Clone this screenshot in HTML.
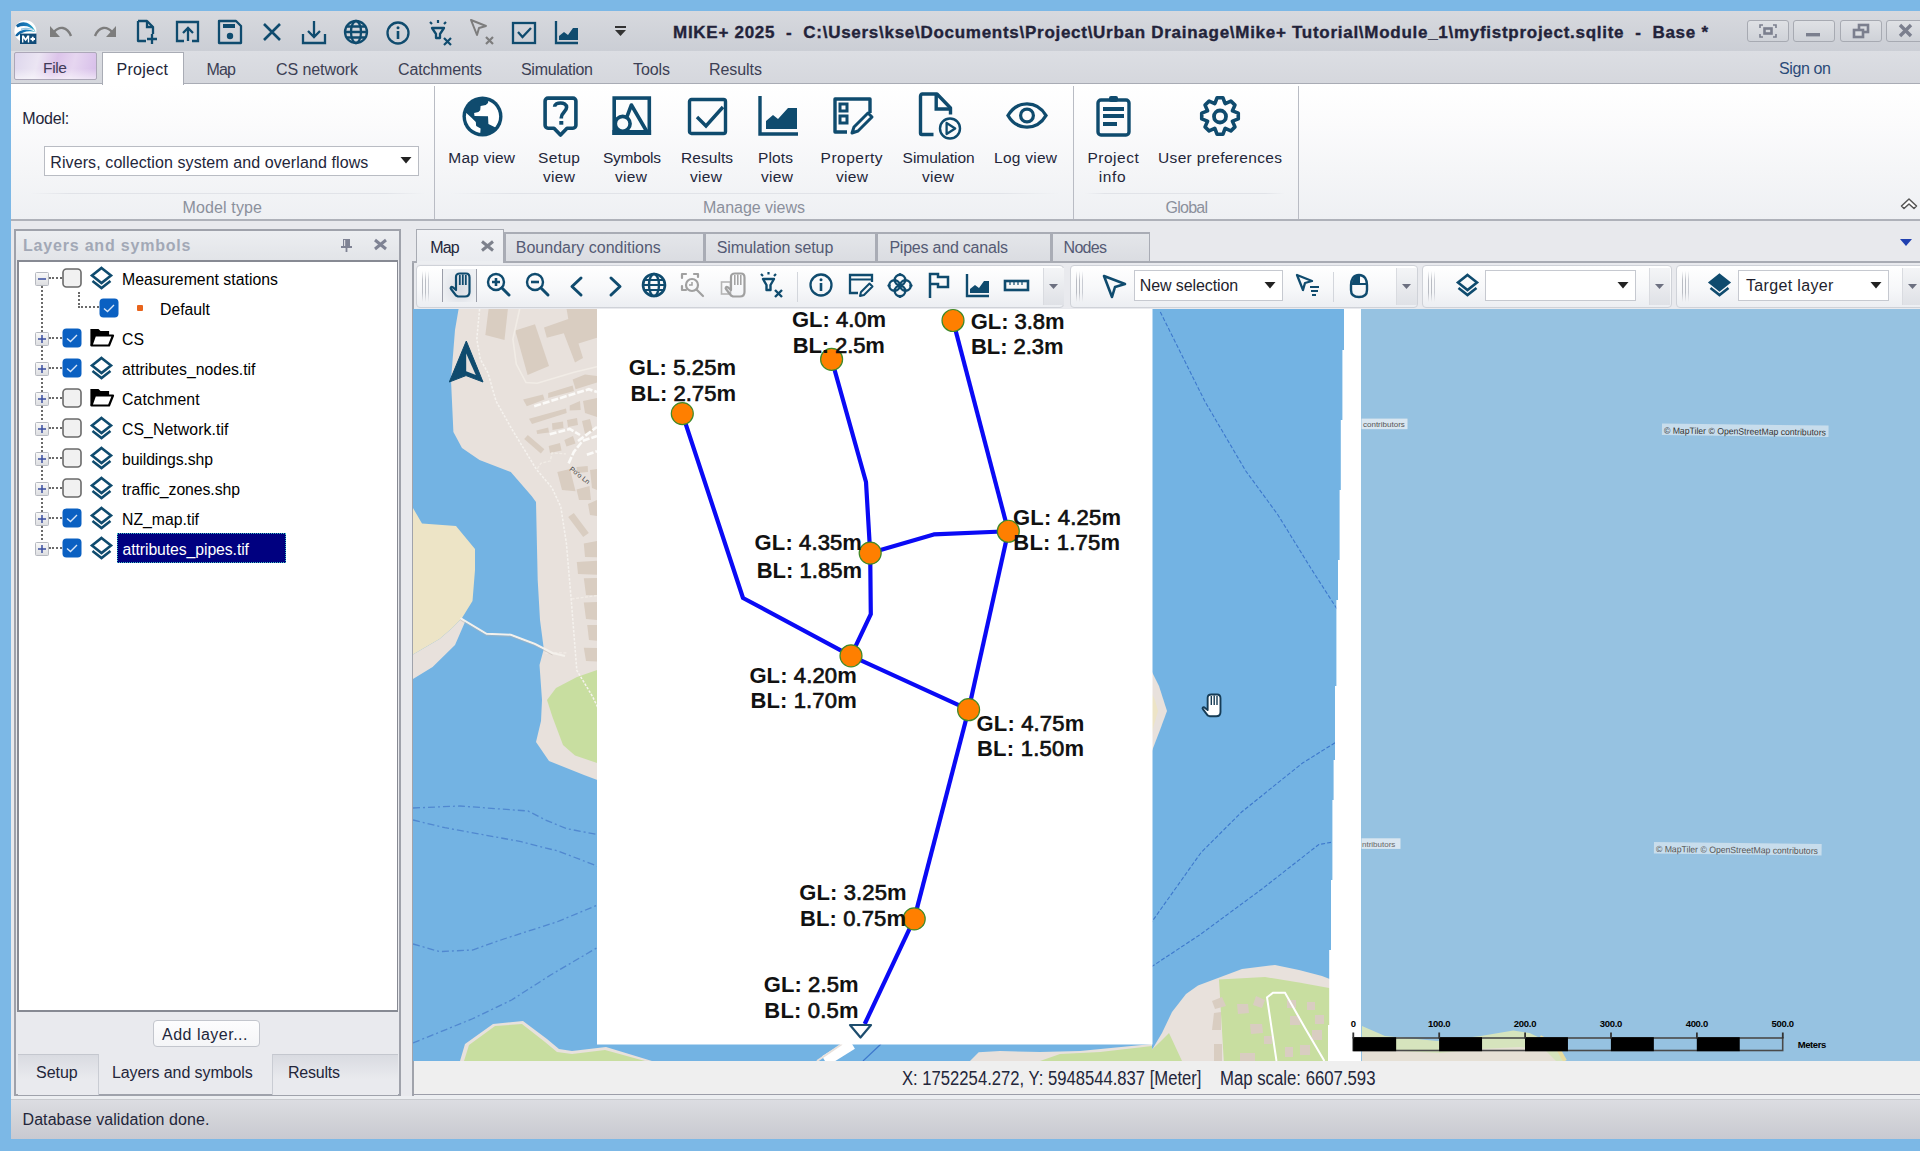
<!DOCTYPE html>
<html><head><meta charset="utf-8"><style>
html,body{margin:0;padding:0;width:1920px;height:1151px;overflow:hidden;background:#7cb8e6;}
body{position:relative;font-family:"Liberation Sans",sans-serif;}
svg{position:absolute;overflow:visible}
</style></head><body>
<div style="position:absolute;left:11px;top:11px;width:1909px;height:1128px;background:#e8e9ed"></div>
<div style="position:absolute;left:11px;top:11px;width:1909px;height:40px;background:linear-gradient(#d7d9de,#cbced5)"></div>
<div style="position:absolute;left:11px;top:51px;width:1909px;height:33px;background:linear-gradient(#dcdee3,#d5d7dd)"></div>
<div style="position:absolute;left:11px;top:83px;width:1909px;height:1px;background:#a9acb5"></div>
<div style="position:absolute;left:11px;top:84px;width:1909px;height:136px;background:linear-gradient(#ffffff,#fbfbfc 30%,#eef0f3)"></div>
<div style="position:absolute;left:11px;top:219px;width:1909px;height:2px;background:#aeb1b9"></div>
<div style="position:absolute;left:14px;top:52px;width:83px;height:28px;background:linear-gradient(rgba(255,255,255,0) 60%,rgba(255,255,255,0.55)),linear-gradient(105deg,#ddd6ec 0%,#ebe5f3 28%,#dcc4ea 50%,#e6d6f0 70%,#d6bde9 100%);border:1px solid #aca7b8;box-sizing:border-box;border-radius:2px"></div>
<div style="position:absolute;left:43.00px;top:60.22px;font-family:'Liberation Sans',sans-serif;font-size:15.5px;line-height:1;font-weight:400;color:#403b58;white-space:pre;letter-spacing:-0.328px;">File</div>
<div style="position:absolute;left:102px;top:52px;width:82px;height:33px;background:#fff;border:1px solid #a9acb5;border-bottom:none;box-sizing:border-box"></div>
<div style="position:absolute;left:116.50px;top:62.20px;font-family:'Liberation Sans',sans-serif;font-size:16px;line-height:1;font-weight:400;color:#23263a;white-space:pre;letter-spacing:0.284px;">Project</div>
<div style="position:absolute;left:206.50px;top:62.20px;font-family:'Liberation Sans',sans-serif;font-size:16px;line-height:1;font-weight:400;color:#3c4054;white-space:pre;letter-spacing:-0.812px;">Map</div>
<div style="position:absolute;left:276.00px;top:62.20px;font-family:'Liberation Sans',sans-serif;font-size:16px;line-height:1;font-weight:400;color:#3c4054;white-space:pre;letter-spacing:-0.078px;">CS network</div>
<div style="position:absolute;left:398.00px;top:62.20px;font-family:'Liberation Sans',sans-serif;font-size:16px;line-height:1;font-weight:400;color:#3c4054;white-space:pre;letter-spacing:-0.153px;">Catchments</div>
<div style="position:absolute;left:521.00px;top:62.20px;font-family:'Liberation Sans',sans-serif;font-size:16px;line-height:1;font-weight:400;color:#3c4054;white-space:pre;letter-spacing:-0.300px;">Simulation</div>
<div style="position:absolute;left:633.00px;top:62.20px;font-family:'Liberation Sans',sans-serif;font-size:16px;line-height:1;font-weight:400;color:#3c4054;white-space:pre;letter-spacing:-0.090px;">Tools</div>
<div style="position:absolute;left:709.00px;top:62.20px;font-family:'Liberation Sans',sans-serif;font-size:16px;line-height:1;font-weight:400;color:#3c4054;white-space:pre;letter-spacing:-0.060px;">Results</div>
<div style="position:absolute;left:1779.00px;top:61.20px;font-family:'Liberation Sans',sans-serif;font-size:16px;line-height:1;font-weight:400;color:#2a4a78;white-space:pre;letter-spacing:-0.378px;">Sign on</div>
<div style="position:absolute;left:673.00px;top:23.85px;font-family:'Liberation Sans',sans-serif;font-size:17px;line-height:1;font-weight:700;color:#23233a;white-space:pre;letter-spacing:0.722px;-webkit-text-stroke:0.35px #23233a">MIKE+ 2025  -  C:\Users\kse\Documents\Project\Urban Drainage\Mike+ Tutorial\Module_1\myfistproject.sqlite  -  Base *</div>
<div style="position:absolute;left:1747px;top:20px;width:42px;height:22px;border:1px solid #a7aab2;border-radius:3px;box-sizing:border-box;background:linear-gradient(#dfe1e5,#cfd2d8)"></div>
<div style="position:absolute;left:1793px;top:20px;width:42px;height:22px;border:1px solid #a7aab2;border-radius:3px;box-sizing:border-box;background:linear-gradient(#dfe1e5,#cfd2d8)"></div>
<div style="position:absolute;left:1840px;top:20px;width:42px;height:22px;border:1px solid #a7aab2;border-radius:3px;box-sizing:border-box;background:linear-gradient(#dfe1e5,#cfd2d8)"></div>
<div style="position:absolute;left:1886px;top:20px;width:42px;height:22px;border:1px solid #a7aab2;border-radius:3px;box-sizing:border-box;background:linear-gradient(#dfe1e5,#cfd2d8)"></div>
<svg style="left:13px;top:19px;" width="25" height="26" viewBox="0 0 25 26"><defs><linearGradient id="lw" x1="0" y1="0" x2="1" y2="0"><stop offset="0" stop-color="#0d5c9a"/><stop offset="0.6" stop-color="#1b7fbf"/><stop offset="1" stop-color="#25b0c0"/></linearGradient></defs>
<circle cx="12.4" cy="12.2" r="11" fill="#fff"/>
<path d="M3 6.5 C8 1.5,17 1.5,22.5 12.5 C18 7.5,11 5.5,4.5 8.5 Z" fill="url(#lw)"/>
<path d="M2.2 16.5 C6 10,15 8.5,23 13 C17 11.5,10 11.5,4 17.5 Z" fill="url(#lw)"/>
<path d="M8 9.5 C13 8,18 9,22 11 C17 10,12 10,8 11Z" fill="#9ccbe6"/>
<rect x="7" y="14.6" width="16.4" height="10.4" fill="#0f4b78"/>
<path d="M9 23.5V16.5H10.8L12.6 19.6L14.4 16.5H16.2V23.5H14.8V19.3L12.6 22.2L10.4 19.3V23.5Z" fill="#fff"/>
<path d="M17.5 20H22M19.75 17.7V22.3" stroke="#fff" stroke-width="1.8"/></svg>
<svg style="left:49px;top:25px;" width="26" height="14" viewBox="0 0 26 14"><path d="M5 7 C10 1,18 1,22 11" fill="none" stroke="#7d7d7d" stroke-width="2.4"/><path d="M1 1 L1 12 L11 12Z" fill="#7d7d7d"/></svg>
<svg style="left:91px;top:25px;" width="26" height="14" viewBox="0 0 26 14"><path d="M21 7 C16 1,8 1,4 11" fill="none" stroke="#7d7d7d" stroke-width="2.4"/><path d="M25 1 L25 12 L15 12Z" fill="#7d7d7d"/></svg>
<svg style="left:136px;top:19px;" width="22" height="26" viewBox="0 0 22 26"><path d="M2 2H11L17 8V15M2 2V22H10" stroke="#0f4b6e" stroke-width="2.3" fill="none" stroke-linejoin="round"/><path d="M11 2V8H17" stroke="#0f4b6e" stroke-width="2.3" fill="none"/><path d="M16 15V25M11 20H21" stroke="#0f4b6e" stroke-width="2.3" fill="none"/></svg>
<svg style="left:175px;top:20px;" width="26" height="24" viewBox="0 0 26 24"><path d="M7 2H23V21H17M9 21H2V2H7" stroke="#0f4b6e" stroke-width="2.3" fill="none"/><path d="M13 21V8M8 13L13 8L18 13" stroke="#0f4b6e" stroke-width="2.3" fill="none"/></svg>
<svg style="left:217px;top:19px;" width="26" height="26" viewBox="0 0 26 26"><path d="M2 2H19L24 7V24H2Z" stroke="#0f4b6e" stroke-width="2.3" fill="none" stroke-linejoin="round"/><rect x="6" y="5" width="12" height="4" fill="#0f4b6e"/><circle cx="13" cy="17" r="3.2" fill="#0f4b6e"/></svg>
<svg style="left:262px;top:22px;" width="20" height="20" viewBox="0 0 20 20"><path d="M2 2L18 18M18 2L2 18" stroke="#0f4b6e" stroke-width="2.6"/></svg>
<svg style="left:301px;top:19px;" width="26" height="26" viewBox="0 0 26 26"><path d="M2 15V24H24V15" stroke="#0f4b6e" stroke-width="2.3" fill="none"/><path d="M13 2V18M7 12L13 18L19 12" stroke="#0f4b6e" stroke-width="2.3" fill="none"/></svg>
<svg style="left:343px;top:19px;" width="26" height="26" viewBox="0 0 26 26"><circle cx="13" cy="13" r="11" stroke="#0f4b6e" stroke-width="2.3" fill="none"/><ellipse cx="13" cy="13" rx="5" ry="11" stroke="#0f4b6e" stroke-width="2.3" fill="none"/><path d="M2 13H24M4 7.5H22M4 18.5H22" stroke="#0f4b6e" stroke-width="2.3" fill="none"/></svg>
<svg style="left:386px;top:21px;" width="25" height="25" viewBox="0 0 25 25"><circle cx="12" cy="12" r="10.5" stroke="#0f4b6e" stroke-width="2.3" fill="none"/><path d="M12 10V18" stroke="#0f4b6e" stroke-width="2.6"/><circle cx="12" cy="6.8" r="1.5" fill="#0f4b6e"/></svg>
<svg style="left:427px;top:19px;" width="27" height="27" viewBox="0 0 27 27"><path d="M5 9H17L13 15V19H9V15Z" stroke="#0f4b6e" stroke-width="2.3" fill="none" stroke-linejoin="round"/><path d="M11 1V4M3 3L5 5M19 3L17 5" stroke="#0f4b6e" stroke-width="2.2"/><path d="M17 19L24 26M24 19L17 26" stroke="#0f4b6e" stroke-width="2.2"/></svg>
<svg style="left:469px;top:18px;" width="27" height="28" viewBox="0 0 27 28"><path d="M2 2L17 8L10 10L8 17Z" fill="none" stroke="#7d7d7d" stroke-width="2" stroke-linejoin="round"/><path d="M17 19L24 26M24 19L17 26" stroke="#7d7d7d" stroke-width="2.2"/></svg>
<svg style="left:511px;top:21px;" width="26" height="23" viewBox="0 0 26 23"><rect x="2" y="2" width="22" height="20" stroke="#0f4b6e" stroke-width="2.3" fill="none"/><path d="M7 11L11.5 16L20 7" stroke="#0f4b6e" stroke-width="2.3" fill="none"/></svg>
<svg style="left:554px;top:20px;" width="26" height="25" viewBox="0 0 26 25"><path d="M2 1V23H24" stroke="#0f4b6e" stroke-width="2.3" fill="none"/><path d="M5 20V16L10 12L14 15L19 8H24V20Z" fill="#0f4b6e"/></svg>
<svg style="left:614px;top:26px;" width="13" height="11" viewBox="0 0 13 11"><rect x="1" y="0" width="11" height="2" fill="#333"/><path d="M1 4H12L6.5 10Z" fill="#333"/></svg>
<svg style="left:1757px;top:23px;" width="22" height="16" viewBox="0 0 22 16"><path d="M3 5V2H6M16 2H19V5M19 11V14H16M6 14H3V11" stroke="#7b7f8e" stroke-width="1.6" fill="none"/><rect x="7.5" y="5.5" width="7" height="5" fill="none" stroke="#7b7f8e" stroke-width="2.6"/></svg>
<svg style="left:1803px;top:26px;" width="22" height="12" viewBox="0 0 22 12"><rect x="3" y="7" width="14" height="3.4" fill="#7b7f8e"/></svg>
<svg style="left:1850px;top:23px;" width="22" height="16" viewBox="0 0 22 16"><rect x="9" y="2" width="9" height="7" fill="none" stroke="#7b7f8e" stroke-width="2.6"/><rect x="4" y="7" width="9" height="7" fill="#dcdee2" stroke="#7b7f8e" stroke-width="2.6"/></svg>
<svg style="left:1896px;top:23px;" width="22" height="16" viewBox="0 0 22 16"><path d="M4 2L15 13M15 2L4 13" stroke="#7b7f8e" stroke-width="3.4"/></svg>
<div style="position:absolute;left:22.30px;top:110.80px;font-family:'Liberation Sans',sans-serif;font-size:16px;line-height:1;font-weight:400;color:#23263a;white-space:pre;letter-spacing:-0.206px;">Model:</div>
<div style="position:absolute;left:44px;top:146px;width:375px;height:30px;background:#fff;border:1px solid #b9bcc3;box-sizing:border-box"></div>
<div style="position:absolute;left:50.30px;top:154.50px;font-family:'Liberation Sans',sans-serif;font-size:16px;line-height:1;font-weight:400;color:#23263a;white-space:pre;letter-spacing:0.095px;">Rivers, collection system and overland flows</div>
<svg style="left:400px;top:156px;" width="12" height="8" viewBox="0 0 12 8"><path d="M0.5 1H11.5L6 7.5Z" fill="#222"/></svg>
<div style="position:absolute;left:434px;top:86px;width:1px;height:133px;background:#b9bcc4"></div>
<div style="position:absolute;left:1073px;top:86px;width:1px;height:133px;background:#b9bcc4"></div>
<div style="position:absolute;left:1298px;top:86px;width:1px;height:133px;background:#b9bcc4"></div>
<div style="position:absolute;left:30px;top:193px;width:395px;height:1px;background:linear-gradient(90deg,rgba(220,222,228,0),#e1e3e8 10%,#e1e3e8 90%,rgba(220,222,228,0))"></div>
<div style="position:absolute;left:450px;top:193px;width:610px;height:1px;background:linear-gradient(90deg,rgba(220,222,228,0),#e1e3e8 10%,#e1e3e8 90%,rgba(220,222,228,0))"></div>
<div style="position:absolute;left:1085px;top:193px;width:200px;height:1px;background:linear-gradient(90deg,rgba(220,222,228,0),#e1e3e8 10%,#e1e3e8 90%,rgba(220,222,228,0))"></div>
<div style="position:absolute;left:182.50px;top:200.20px;font-family:'Liberation Sans',sans-serif;font-size:16px;line-height:1;font-weight:400;color:#8b909c;white-space:pre;letter-spacing:0.137px;">Model type</div>
<div style="position:absolute;left:703.00px;top:200.20px;font-family:'Liberation Sans',sans-serif;font-size:16px;line-height:1;font-weight:400;color:#8b909c;white-space:pre;letter-spacing:-0.026px;">Manage views</div>
<div style="position:absolute;left:1165.60px;top:200.20px;font-family:'Liberation Sans',sans-serif;font-size:16px;line-height:1;font-weight:400;color:#8b909c;white-space:pre;letter-spacing:-0.770px;">Global</div>
<div style="position:absolute;left:448.30px;top:149.62px;font-family:'Liberation Sans',sans-serif;font-size:15.5px;line-height:1;font-weight:400;color:#23263a;white-space:pre;letter-spacing:0.176px;">Map view</div>
<div style="position:absolute;left:538.00px;top:149.62px;font-family:'Liberation Sans',sans-serif;font-size:15.5px;line-height:1;font-weight:400;color:#23263a;white-space:pre;letter-spacing:0.371px;">Setup</div>
<div style="position:absolute;left:543.00px;top:168.93px;font-family:'Liberation Sans',sans-serif;font-size:15.5px;line-height:1;font-weight:400;color:#23263a;white-space:pre;letter-spacing:0.328px;">view</div>
<div style="position:absolute;left:603.00px;top:149.62px;font-family:'Liberation Sans',sans-serif;font-size:15.5px;line-height:1;font-weight:400;color:#23263a;white-space:pre;letter-spacing:-0.240px;">Symbols</div>
<div style="position:absolute;left:615.00px;top:168.93px;font-family:'Liberation Sans',sans-serif;font-size:15.5px;line-height:1;font-weight:400;color:#23263a;white-space:pre;letter-spacing:0.328px;">view</div>
<div style="position:absolute;left:681.00px;top:149.62px;font-family:'Liberation Sans',sans-serif;font-size:15.5px;line-height:1;font-weight:400;color:#23263a;white-space:pre;letter-spacing:0.052px;">Results</div>
<div style="position:absolute;left:690.00px;top:168.93px;font-family:'Liberation Sans',sans-serif;font-size:15.5px;line-height:1;font-weight:400;color:#23263a;white-space:pre;letter-spacing:0.328px;">view</div>
<div style="position:absolute;left:758.00px;top:149.62px;font-family:'Liberation Sans',sans-serif;font-size:15.5px;line-height:1;font-weight:400;color:#23263a;white-space:pre;letter-spacing:0.133px;">Plots</div>
<div style="position:absolute;left:761.00px;top:168.93px;font-family:'Liberation Sans',sans-serif;font-size:15.5px;line-height:1;font-weight:400;color:#23263a;white-space:pre;letter-spacing:0.328px;">view</div>
<div style="position:absolute;left:820.60px;top:149.62px;font-family:'Liberation Sans',sans-serif;font-size:15.5px;line-height:1;font-weight:400;color:#23263a;white-space:pre;letter-spacing:0.487px;">Property</div>
<div style="position:absolute;left:836.00px;top:168.93px;font-family:'Liberation Sans',sans-serif;font-size:15.5px;line-height:1;font-weight:400;color:#23263a;white-space:pre;letter-spacing:0.328px;">view</div>
<div style="position:absolute;left:902.60px;top:149.62px;font-family:'Liberation Sans',sans-serif;font-size:15.5px;line-height:1;font-weight:400;color:#23263a;white-space:pre;letter-spacing:-0.042px;">Simulation</div>
<div style="position:absolute;left:922.00px;top:168.93px;font-family:'Liberation Sans',sans-serif;font-size:15.5px;line-height:1;font-weight:400;color:#23263a;white-space:pre;letter-spacing:0.328px;">view</div>
<div style="position:absolute;left:994.00px;top:149.62px;font-family:'Liberation Sans',sans-serif;font-size:15.5px;line-height:1;font-weight:400;color:#23263a;white-space:pre;letter-spacing:0.259px;">Log view</div>
<div style="position:absolute;left:1087.50px;top:149.62px;font-family:'Liberation Sans',sans-serif;font-size:15.5px;line-height:1;font-weight:400;color:#23263a;white-space:pre;letter-spacing:0.492px;">Project</div>
<div style="position:absolute;left:1098.75px;top:168.93px;font-family:'Liberation Sans',sans-serif;font-size:15.5px;line-height:1;font-weight:400;color:#23263a;white-space:pre;letter-spacing:0.600px;">info</div>
<div style="position:absolute;left:1158.00px;top:149.62px;font-family:'Liberation Sans',sans-serif;font-size:15.5px;line-height:1;font-weight:400;color:#23263a;white-space:pre;letter-spacing:0.341px;">User preferences</div>
<svg style="left:1900px;top:197px;" width="20" height="15" viewBox="0 0 20 15"><path d="M1.5 9L9 2L16.5 9L14 11.5L9 7L4 11.5Z" fill="#fff" stroke="#555" stroke-width="1.5" stroke-linejoin="round"/></svg>
<svg style="left:462px;top:96px;" width="41" height="41" viewBox="0 0 41 41"><defs><clipPath id="gcl"><circle cx="20.5" cy="20.5" r="16.6"/></clipPath></defs><circle cx="20.5" cy="20.5" r="20" fill="#0f4b6e"/><g clip-path="url(#gcl)" fill="#fff"><path d="M26.4 4 L34 9 L38 16.9 L38 24.2 L33.5 31.5 L26.4 28.1 L26 20.3 L12.5 19.9 L12.1 16.9 L16.4 16 L18.2 14.2 L18.6 9.9 L23.8 9 L26 6.9Z"/><path d="M2 15.5 L4.3 16.9 L9 21.2 L13.8 26 L14.2 29.9 L18.6 32.5 L18.2 38 L12.5 36 L4 30 Z"/></g></svg>
<svg style="left:542px;top:95px;" width="37" height="43" viewBox="0 0 37 43"><path d="M6 3.1H31C32.6 3.1,33.9 4.4,33.9 6V30.3C33.9 31.9,32.6 33.2,31 33.2H25L18.5 40L12 33.2H6C4.4 33.2,3.1 31.9,3.1 30.3V6C3.1 4.4,4.4 3.1,6 3.1Z" fill="none" stroke="#0f4b6e" stroke-width="3.6" stroke-linejoin="round"/><path d="M12.6 11.8C12.6 6.8,24.6 6.3,24.6 12.3C24.6 16.8,19.3 17.5,19.3 22.8V23.6" fill="none" stroke="#0f4b6e" stroke-width="3.6"/><rect x="17.3" y="26" width="4" height="3.7" fill="#0f4b6e"/></svg>
<svg style="left:612px;top:95px;" width="40" height="41" viewBox="0 0 40 41"><rect x="2.2" y="3.05" width="35.1" height="35.15" fill="none" stroke="#0f4b6e" stroke-width="3.6"/><rect x="0.4" y="35" width="38.7" height="5" fill="#0f4b6e"/><path d="M14.6 22.6 L19.4 10 L34.5 36" fill="none" stroke="#0f4b6e" stroke-width="3.6" stroke-linejoin="round"/><circle cx="10.7" cy="28.8" r="7.4" fill="none" stroke="#0f4b6e" stroke-width="3.6"/></svg>
<svg style="left:687px;top:97px;" width="41" height="40" viewBox="0 0 41 40"><rect x="2.5" y="2.5" width="36" height="34" rx="2" stroke="#0f4b6e" stroke-width="3.4" fill="none"/><path d="M10 20L19 29L36 10" stroke="#0f4b6e" stroke-width="3.4" fill="none"/></svg>
<svg style="left:757px;top:96px;" width="42" height="41" viewBox="0 0 42 41"><path d="M3 0V38H41" stroke="#0f4b6e" stroke-width="3.4" fill="none"/><path d="M9 33V25L16 19L21 23L31 12H40V33Z" fill="#0f4b6e"/></svg>
<svg style="left:832px;top:96px;" width="42" height="41" viewBox="0 0 42 41"><path d="M15 36H3V3H38V17" stroke="#0f4b6e" stroke-width="3.4" fill="none" stroke-linejoin="round"/><rect x="8" y="8" width="7" height="7" fill="none" stroke="#0f4b6e" stroke-width="3"/><rect x="8" y="20" width="7" height="7" fill="none" stroke="#0f4b6e" stroke-width="3"/><path d="M20 37L22 31L36 17L40 21L26 35Z" fill="none" stroke="#0f4b6e" stroke-width="3" stroke-linejoin="round"/></svg>
<svg style="left:917px;top:92px;" width="46" height="48" viewBox="0 0 46 48"><path d="M16.5 42.5H5C4 42.5,3.5 42,3.5 41V4.5C3.5 3.5,4 2,5 2H20L33.5 16V22.5" stroke="#0f4b6e" stroke-width="3.4" fill="none" stroke-linejoin="round"/><path d="M19.2 2V17H33.5" stroke="#0f4b6e" stroke-width="3.4" fill="none"/><circle cx="33" cy="36.5" r="10" fill="none" stroke="#0f4b6e" stroke-width="2.4"/><path d="M29.6 31L38.2 36.5L29.6 42Z" fill="none" stroke="#0f4b6e" stroke-width="2.3" stroke-linejoin="round"/></svg>
<svg style="left:1006px;top:101px;" width="42" height="30" viewBox="0 0 42 30"><path d="M2 14.5C11 -1,31 -1,40 14.5C31 30,11 30,2 14.5Z" stroke="#0f4b6e" stroke-width="3.4" fill="none"/><circle cx="21" cy="14.5" r="6.4" stroke="#0f4b6e" stroke-width="3.2" fill="none"/></svg>
<svg style="left:1095px;top:95px;" width="37" height="43" viewBox="0 0 37 43"><rect x="3" y="5" width="31" height="35" rx="3" stroke="#0f4b6e" stroke-width="3.4" fill="none"/><rect x="14" y="1" width="9" height="6" rx="2" fill="#0f4b6e"/><path d="M8 14H29M8 21H29M8 29H22" stroke="#0f4b6e" stroke-width="4"/></svg>
<svg style="left:1200px;top:96px;" width="40" height="41" viewBox="0 0 40 41"><path d="M14.94 7.48 L17.11 1.73 L22.89 1.73 L25.06 7.48 L25.27 7.57 L30.87 5.03 L34.97 9.13 L32.43 14.73 L32.52 14.94 L38.27 17.11 L38.27 22.89 L32.52 25.06 L32.43 25.27 L34.97 30.87 L30.87 34.97 L25.27 32.43 L25.06 32.52 L22.89 38.27 L17.11 38.27 L14.94 32.52 L14.73 32.43 L9.13 34.97 L5.03 30.87 L7.57 25.27 L7.48 25.06 L1.73 22.89 L1.73 17.11 L7.48 14.94 L7.57 14.73 L5.03 9.13 L9.13 5.03 L14.73 7.57Z" fill="none" stroke="#0f4b6e" stroke-width="3.6" stroke-linejoin="round"/><circle cx="20" cy="20.5" r="6" fill="none" stroke="#0f4b6e" stroke-width="3.8"/></svg>
<div style="position:absolute;left:14px;top:229px;width:387px;height:867px;border:2px solid #9fa2ab;box-sizing:border-box;background:#e9eaee"></div>
<div style="position:absolute;left:16px;top:231px;width:383px;height:29px;background:linear-gradient(#eceef1,#e2e4e8)"></div>
<div style="position:absolute;left:23.00px;top:237.70px;font-family:'Liberation Sans',sans-serif;font-size:16px;line-height:1;font-weight:700;color:#a2a8b6;white-space:pre;letter-spacing:0.803px;">Layers and symbols</div>
<svg style="left:340px;top:238px;" width="13" height="14" viewBox="0 0 13 14"><rect x="3" y="1" width="7" height="8" fill="#7f8394"/><rect x="1" y="8" width="11" height="2" fill="#7f8394"/><rect x="5.6" y="9" width="1.8" height="5" fill="#7f8394"/><rect x="4" y="2" width="1.2" height="6" fill="#dcdde2"/></svg>
<svg style="left:373px;top:238px;" width="15" height="13" viewBox="0 0 15 13"><path d="M2 2L13 11M13 2L2 11" stroke="#7f8394" stroke-width="3"/></svg>
<div style="position:absolute;left:17px;top:260px;width:381px;height:752px;border:2px solid #878a93;border-right-width:1px;border-bottom-width:2px;box-sizing:border-box;background:#fff"></div>
<svg width="0" height="0" style="position:absolute"><defs><linearGradient id="expg" x1="0" y1="0" x2="0" y2="1"><stop offset="0" stop-color="#fafafa"/><stop offset="1" stop-color="#dcdde0"/></linearGradient></defs></svg>
<div style="position:absolute;left:41px;top:286px;width:0;height:262px;border-left:2px dotted #6a6a6a"></div>
<div style="position:absolute;left:49px;top:277px;width:13px;height:0;border-top:2px dotted #6a6a6a"></div>
<svg style="left:35px;top:272px;" width="14" height="14" viewBox="0 0 14 14"><rect x="0.5" y="0.5" width="13" height="13" rx="1" fill="url(#expg)" stroke="#b6b9c0"/><path d="M3 7H11" stroke="#3a4ea0" stroke-width="1.5"/></svg>
<svg style="left:62px;top:268px;" width="20" height="20" viewBox="0 0 20 20"><rect x="1" y="1" width="18" height="18" rx="3.5" fill="#f1f1f1" stroke="#6a6a6a" stroke-width="1.6"/></svg>
<svg style="left:90px;top:266px;" width="23" height="25" viewBox="0 0 23 25"><path d="M11.5 2L21 9.5L11.5 17L2 9.5Z" fill="none" stroke="#0f4b6e" stroke-width="2.6" stroke-linejoin="miter"/><path d="M2.5 15L11.5 22L20.5 15" fill="none" stroke="#0f4b6e" stroke-width="2.6"/></svg>
<div style="position:absolute;left:122.00px;top:272.37px;font-family:'Liberation Sans',sans-serif;font-size:15.8px;line-height:1;font-weight:400;color:#000;white-space:pre;letter-spacing:0.030px;">Measurement stations</div>
<div style="position:absolute;left:78px;top:292px;width:21px;height:16px;border-left:2px dotted #6a6a6a;border-bottom:2px dotted #6a6a6a;box-sizing:border-box"></div>
<svg style="left:99px;top:298px;" width="20" height="20" viewBox="0 0 20 20"><rect x="0.5" y="0.5" width="19" height="19" rx="4" fill="#0a60c2"/><path d="M5 10.5L8.5 13.5L15 7" fill="none" stroke="#d8e6f8" stroke-width="1.4"/></svg>
<div style="position:absolute;left:137px;top:305px;width:6px;height:6px;background:#e8641c;border-radius:1px"></div>
<div style="position:absolute;left:160.00px;top:302.37px;font-family:'Liberation Sans',sans-serif;font-size:15.8px;line-height:1;font-weight:400;color:#000;white-space:pre;letter-spacing:-0.010px;">Default</div>
<div style="position:absolute;left:49px;top:337px;width:13px;height:0;border-top:2px dotted #6a6a6a"></div>
<svg style="left:35px;top:332px;" width="14" height="14" viewBox="0 0 14 14"><rect x="0.5" y="0.5" width="13" height="13" rx="1" fill="url(#expg)" stroke="#b6b9c0"/><path d="M3 7H11" stroke="#3a4ea0" stroke-width="1.5"/><path d="M7 3V11" stroke="#3a4ea0" stroke-width="1.5"/></svg>
<svg style="left:62px;top:328px;" width="20" height="20" viewBox="0 0 20 20"><rect x="0.5" y="0.5" width="19" height="19" rx="4" fill="#0a60c2"/><path d="M5 10.5L8.5 13.5L15 7" fill="none" stroke="#d8e6f8" stroke-width="1.4"/></svg>
<svg style="left:90px;top:328px;" width="24" height="19" viewBox="0 0 24 19"><path d="M1.5 17.5V2H8L10 4H18V7" fill="none" stroke="#000" stroke-width="2.2"/><path d="M1 3H9L10 5H18V7H5L1.5 17Z" fill="#000"/><path d="M1.5 17.5L5 7.5H23L19 17.5Z" fill="none" stroke="#000" stroke-width="2.2" stroke-linejoin="round"/></svg>
<div style="position:absolute;left:122.00px;top:332.37px;font-family:'Liberation Sans',sans-serif;font-size:15.8px;line-height:1;font-weight:400;color:#000;white-space:pre;letter-spacing:0.047px;">CS</div>
<div style="position:absolute;left:49px;top:367px;width:13px;height:0;border-top:2px dotted #6a6a6a"></div>
<svg style="left:35px;top:362px;" width="14" height="14" viewBox="0 0 14 14"><rect x="0.5" y="0.5" width="13" height="13" rx="1" fill="url(#expg)" stroke="#b6b9c0"/><path d="M3 7H11" stroke="#3a4ea0" stroke-width="1.5"/><path d="M7 3V11" stroke="#3a4ea0" stroke-width="1.5"/></svg>
<svg style="left:62px;top:358px;" width="20" height="20" viewBox="0 0 20 20"><rect x="0.5" y="0.5" width="19" height="19" rx="4" fill="#0a60c2"/><path d="M5 10.5L8.5 13.5L15 7" fill="none" stroke="#d8e6f8" stroke-width="1.4"/></svg>
<svg style="left:90px;top:356px;" width="23" height="25" viewBox="0 0 23 25"><path d="M11.5 2L21 9.5L11.5 17L2 9.5Z" fill="none" stroke="#0f4b6e" stroke-width="2.6" stroke-linejoin="miter"/><path d="M2.5 15L11.5 22L20.5 15" fill="none" stroke="#0f4b6e" stroke-width="2.6"/></svg>
<div style="position:absolute;left:122.00px;top:362.37px;font-family:'Liberation Sans',sans-serif;font-size:15.8px;line-height:1;font-weight:400;color:#000;white-space:pre;letter-spacing:0.001px;">attributes_nodes.tif</div>
<div style="position:absolute;left:49px;top:397px;width:13px;height:0;border-top:2px dotted #6a6a6a"></div>
<svg style="left:35px;top:392px;" width="14" height="14" viewBox="0 0 14 14"><rect x="0.5" y="0.5" width="13" height="13" rx="1" fill="url(#expg)" stroke="#b6b9c0"/><path d="M3 7H11" stroke="#3a4ea0" stroke-width="1.5"/><path d="M7 3V11" stroke="#3a4ea0" stroke-width="1.5"/></svg>
<svg style="left:62px;top:388px;" width="20" height="20" viewBox="0 0 20 20"><rect x="1" y="1" width="18" height="18" rx="3.5" fill="#f1f1f1" stroke="#6a6a6a" stroke-width="1.6"/></svg>
<svg style="left:90px;top:388px;" width="24" height="19" viewBox="0 0 24 19"><path d="M1.5 17.5V2H8L10 4H18V7" fill="none" stroke="#000" stroke-width="2.2"/><path d="M1 3H9L10 5H18V7H5L1.5 17Z" fill="#000"/><path d="M1.5 17.5L5 7.5H23L19 17.5Z" fill="none" stroke="#000" stroke-width="2.2" stroke-linejoin="round"/></svg>
<div style="position:absolute;left:122.00px;top:392.37px;font-family:'Liberation Sans',sans-serif;font-size:15.8px;line-height:1;font-weight:400;color:#000;white-space:pre;letter-spacing:0.164px;">Catchment</div>
<div style="position:absolute;left:49px;top:427px;width:13px;height:0;border-top:2px dotted #6a6a6a"></div>
<svg style="left:35px;top:422px;" width="14" height="14" viewBox="0 0 14 14"><rect x="0.5" y="0.5" width="13" height="13" rx="1" fill="url(#expg)" stroke="#b6b9c0"/><path d="M3 7H11" stroke="#3a4ea0" stroke-width="1.5"/><path d="M7 3V11" stroke="#3a4ea0" stroke-width="1.5"/></svg>
<svg style="left:62px;top:418px;" width="20" height="20" viewBox="0 0 20 20"><rect x="1" y="1" width="18" height="18" rx="3.5" fill="#f1f1f1" stroke="#6a6a6a" stroke-width="1.6"/></svg>
<svg style="left:90px;top:416px;" width="23" height="25" viewBox="0 0 23 25"><path d="M11.5 2L21 9.5L11.5 17L2 9.5Z" fill="none" stroke="#0f4b6e" stroke-width="2.6" stroke-linejoin="miter"/><path d="M2.5 15L11.5 22L20.5 15" fill="none" stroke="#0f4b6e" stroke-width="2.6"/></svg>
<div style="position:absolute;left:122.00px;top:422.37px;font-family:'Liberation Sans',sans-serif;font-size:15.8px;line-height:1;font-weight:400;color:#000;white-space:pre;letter-spacing:0.081px;">CS_Network.tif</div>
<div style="position:absolute;left:49px;top:457px;width:13px;height:0;border-top:2px dotted #6a6a6a"></div>
<svg style="left:35px;top:452px;" width="14" height="14" viewBox="0 0 14 14"><rect x="0.5" y="0.5" width="13" height="13" rx="1" fill="url(#expg)" stroke="#b6b9c0"/><path d="M3 7H11" stroke="#3a4ea0" stroke-width="1.5"/><path d="M7 3V11" stroke="#3a4ea0" stroke-width="1.5"/></svg>
<svg style="left:62px;top:448px;" width="20" height="20" viewBox="0 0 20 20"><rect x="1" y="1" width="18" height="18" rx="3.5" fill="#f1f1f1" stroke="#6a6a6a" stroke-width="1.6"/></svg>
<svg style="left:90px;top:446px;" width="23" height="25" viewBox="0 0 23 25"><path d="M11.5 2L21 9.5L11.5 17L2 9.5Z" fill="none" stroke="#0f4b6e" stroke-width="2.6" stroke-linejoin="miter"/><path d="M2.5 15L11.5 22L20.5 15" fill="none" stroke="#0f4b6e" stroke-width="2.6"/></svg>
<div style="position:absolute;left:122.00px;top:452.37px;font-family:'Liberation Sans',sans-serif;font-size:15.8px;line-height:1;font-weight:400;color:#000;white-space:pre;letter-spacing:-0.102px;">buildings.shp</div>
<div style="position:absolute;left:49px;top:487px;width:13px;height:0;border-top:2px dotted #6a6a6a"></div>
<svg style="left:35px;top:482px;" width="14" height="14" viewBox="0 0 14 14"><rect x="0.5" y="0.5" width="13" height="13" rx="1" fill="url(#expg)" stroke="#b6b9c0"/><path d="M3 7H11" stroke="#3a4ea0" stroke-width="1.5"/><path d="M7 3V11" stroke="#3a4ea0" stroke-width="1.5"/></svg>
<svg style="left:62px;top:478px;" width="20" height="20" viewBox="0 0 20 20"><rect x="1" y="1" width="18" height="18" rx="3.5" fill="#f1f1f1" stroke="#6a6a6a" stroke-width="1.6"/></svg>
<svg style="left:90px;top:476px;" width="23" height="25" viewBox="0 0 23 25"><path d="M11.5 2L21 9.5L11.5 17L2 9.5Z" fill="none" stroke="#0f4b6e" stroke-width="2.6" stroke-linejoin="miter"/><path d="M2.5 15L11.5 22L20.5 15" fill="none" stroke="#0f4b6e" stroke-width="2.6"/></svg>
<div style="position:absolute;left:122.00px;top:482.37px;font-family:'Liberation Sans',sans-serif;font-size:15.8px;line-height:1;font-weight:400;color:#000;white-space:pre;letter-spacing:-0.071px;">traffic_zones.shp</div>
<div style="position:absolute;left:49px;top:517px;width:13px;height:0;border-top:2px dotted #6a6a6a"></div>
<svg style="left:35px;top:512px;" width="14" height="14" viewBox="0 0 14 14"><rect x="0.5" y="0.5" width="13" height="13" rx="1" fill="url(#expg)" stroke="#b6b9c0"/><path d="M3 7H11" stroke="#3a4ea0" stroke-width="1.5"/><path d="M7 3V11" stroke="#3a4ea0" stroke-width="1.5"/></svg>
<svg style="left:62px;top:508px;" width="20" height="20" viewBox="0 0 20 20"><rect x="0.5" y="0.5" width="19" height="19" rx="4" fill="#0a60c2"/><path d="M5 10.5L8.5 13.5L15 7" fill="none" stroke="#d8e6f8" stroke-width="1.4"/></svg>
<svg style="left:90px;top:506px;" width="23" height="25" viewBox="0 0 23 25"><path d="M11.5 2L21 9.5L11.5 17L2 9.5Z" fill="none" stroke="#0f4b6e" stroke-width="2.6" stroke-linejoin="miter"/><path d="M2.5 15L11.5 22L20.5 15" fill="none" stroke="#0f4b6e" stroke-width="2.6"/></svg>
<div style="position:absolute;left:122.00px;top:512.37px;font-family:'Liberation Sans',sans-serif;font-size:15.8px;line-height:1;font-weight:400;color:#000;white-space:pre;letter-spacing:-0.028px;">NZ_map.tif</div>
<div style="position:absolute;left:49px;top:547px;width:13px;height:0;border-top:2px dotted #6a6a6a"></div>
<svg style="left:35px;top:542px;" width="14" height="14" viewBox="0 0 14 14"><rect x="0.5" y="0.5" width="13" height="13" rx="1" fill="url(#expg)" stroke="#b6b9c0"/><path d="M3 7H11" stroke="#3a4ea0" stroke-width="1.5"/><path d="M7 3V11" stroke="#3a4ea0" stroke-width="1.5"/></svg>
<svg style="left:62px;top:538px;" width="20" height="20" viewBox="0 0 20 20"><rect x="0.5" y="0.5" width="19" height="19" rx="4" fill="#0a60c2"/><path d="M5 10.5L8.5 13.5L15 7" fill="none" stroke="#d8e6f8" stroke-width="1.4"/></svg>
<svg style="left:90px;top:536px;" width="23" height="25" viewBox="0 0 23 25"><path d="M11.5 2L21 9.5L11.5 17L2 9.5Z" fill="none" stroke="#0f4b6e" stroke-width="2.6" stroke-linejoin="miter"/><path d="M2.5 15L11.5 22L20.5 15" fill="none" stroke="#0f4b6e" stroke-width="2.6"/></svg>
<div style="position:absolute;left:117px;top:533px;width:169px;height:30px;background:#000080;outline:1px dotted #40c0c0;outline-offset:-1px"></div>
<div style="position:absolute;left:122.50px;top:542.37px;font-family:'Liberation Sans',sans-serif;font-size:15.8px;line-height:1;font-weight:400;color:#fff;white-space:pre;letter-spacing:-0.090px;">attributes_pipes.tif</div>
<div style="position:absolute;left:153px;top:1020px;width:107px;height:27px;background:linear-gradient(#fdfdfe,#f4f5f7);border:1px solid #c3c6cd;border-radius:4px;box-sizing:border-box"></div>
<div style="position:absolute;left:162.00px;top:1026.80px;font-family:'Liberation Sans',sans-serif;font-size:16px;line-height:1;font-weight:400;color:#23263a;white-space:pre;letter-spacing:0.496px;">Add layer...</div>
<div style="position:absolute;left:18px;top:1054px;width:81px;height:41px;background:linear-gradient(#d9dbe1,#e9eaee 60%);border-top:1px solid #c4c7ce;border-right:1px solid #c9ccd3;box-sizing:border-box"></div>
<div style="position:absolute;left:272px;top:1054px;width:126px;height:41px;background:linear-gradient(#d9dbe1,#e9eaee 60%);border-top:1px solid #c4c7ce;border-left:1px solid #c9ccd3;box-sizing:border-box"></div>
<div style="position:absolute;left:36.00px;top:1064.70px;font-family:'Liberation Sans',sans-serif;font-size:16px;line-height:1;font-weight:400;color:#23263a;white-space:pre;letter-spacing:-0.028px;">Setup</div>
<div style="position:absolute;left:112.00px;top:1064.70px;font-family:'Liberation Sans',sans-serif;font-size:16px;line-height:1;font-weight:400;color:#23263a;white-space:pre;letter-spacing:-0.094px;">Layers and symbols</div>
<div style="position:absolute;left:288.00px;top:1064.70px;font-family:'Liberation Sans',sans-serif;font-size:16px;line-height:1;font-weight:400;color:#23263a;white-space:pre;letter-spacing:-0.227px;">Results</div>
<div style="position:absolute;left:11px;top:1096px;width:1909px;height:3.5px;background:#eceef1"></div>
<div style="position:absolute;left:11px;top:1099.3px;width:1909px;height:1px;background:#c8cace"></div>
<div style="position:absolute;left:11px;top:1100.3px;width:1909px;height:38.5px;background:linear-gradient(#dcdde2,#d2d3d8 50%,#c8c9d1)"></div>
<div style="position:absolute;left:22.50px;top:1112.20px;font-family:'Liberation Sans',sans-serif;font-size:16px;line-height:1;font-weight:400;color:#23263a;white-space:pre;letter-spacing:0.082px;">Database validation done.</div>
<div style="position:absolute;left:504px;top:232px;width:200px;height:30px;background:linear-gradient(#e4e6ea,#dadce1);border:1px solid #a9acb5;border-width:2px 1px 0 2px;box-sizing:border-box"></div>
<div style="position:absolute;left:515.80px;top:240.20px;font-family:'Liberation Sans',sans-serif;font-size:16px;line-height:1;font-weight:400;color:#545a74;white-space:pre;letter-spacing:0.001px;">Boundary conditions</div>
<div style="position:absolute;left:704px;top:232px;width:172px;height:30px;background:linear-gradient(#e4e6ea,#dadce1);border:1px solid #a9acb5;border-width:2px 1px 0 2px;box-sizing:border-box"></div>
<div style="position:absolute;left:716.70px;top:240.20px;font-family:'Liberation Sans',sans-serif;font-size:16px;line-height:1;font-weight:400;color:#545a74;white-space:pre;letter-spacing:-0.113px;">Simulation setup</div>
<div style="position:absolute;left:876px;top:232px;width:175px;height:30px;background:linear-gradient(#e4e6ea,#dadce1);border:1px solid #a9acb5;border-width:2px 1px 0 2px;box-sizing:border-box"></div>
<div style="position:absolute;left:889.40px;top:240.20px;font-family:'Liberation Sans',sans-serif;font-size:16px;line-height:1;font-weight:400;color:#545a74;white-space:pre;letter-spacing:-0.217px;">Pipes and canals</div>
<div style="position:absolute;left:1051px;top:232px;width:99px;height:30px;background:linear-gradient(#e4e6ea,#dadce1);border:1px solid #a9acb5;border-width:2px 1px 0 2px;box-sizing:border-box"></div>
<div style="position:absolute;left:1063.60px;top:240.20px;font-family:'Liberation Sans',sans-serif;font-size:16px;line-height:1;font-weight:400;color:#545a74;white-space:pre;letter-spacing:-0.713px;">Nodes</div>
<div style="position:absolute;left:416px;top:229px;width:88px;height:34px;background:linear-gradient(#f1f2f5,#e9ebef);border:1px solid #a8abb3;border-bottom:none;box-sizing:border-box"></div>
<div style="position:absolute;left:430.30px;top:240.20px;font-family:'Liberation Sans',sans-serif;font-size:16px;line-height:1;font-weight:400;color:#23263a;white-space:pre;letter-spacing:-0.863px;">Map</div>
<svg style="left:480px;top:240px;" width="15" height="12" viewBox="0 0 15 12"><path d="M2 1.5L13 10.5M13 1.5L2 10.5" stroke="#7d818c" stroke-width="3"/></svg>
<svg style="left:1899px;top:238px;" width="14" height="9" viewBox="0 0 14 9"><path d="M1 1H13L7 8Z" fill="#2040b0"/></svg>
<div style="position:absolute;left:412px;top:262px;width:1508px;height:834px;border-left:2px solid #a0a3ab;box-sizing:border-box;background:#eceef1"></div>
<div style="position:absolute;left:414px;top:263px;width:1506px;height:46px;background:#e9eaee"></div>
<div style="position:absolute;left:412px;top:261px;width:1508px;height:2px;background:#a8abb3"></div>
<div style="position:absolute;left:417px;top:261px;width:86px;height:3px;background:#eceef1"></div>
<div style="position:absolute;left:416px;top:265px;width:648px;height:43px;background:linear-gradient(#ffffff,#f6f7f9 60%,#eceef2);border:1px solid #cfd2d8;border-radius:4px;box-sizing:border-box"></div>
<div style="position:absolute;left:422px;top:271px;width:1px;height:31px;background:linear-gradient(rgba(180,183,190,0),#b9bcc3 30%,#b9bcc3 70%,rgba(180,183,190,0))"></div>
<div style="position:absolute;left:425px;top:271px;width:1px;height:31px;background:linear-gradient(rgba(180,183,190,0),#b9bcc3 30%,#b9bcc3 70%,rgba(180,183,190,0))"></div>
<div style="position:absolute;left:428px;top:271px;width:1px;height:31px;background:linear-gradient(rgba(180,183,190,0),#c9ccd3 30%,#c9ccd3 70%,rgba(180,183,190,0))"></div>
<div style="position:absolute;left:1070px;top:265px;width:348px;height:43px;background:linear-gradient(#ffffff,#f6f7f9 60%,#eceef2);border:1px solid #cfd2d8;border-radius:4px;box-sizing:border-box"></div>
<div style="position:absolute;left:1076px;top:271px;width:1px;height:31px;background:linear-gradient(rgba(180,183,190,0),#b9bcc3 30%,#b9bcc3 70%,rgba(180,183,190,0))"></div>
<div style="position:absolute;left:1079px;top:271px;width:1px;height:31px;background:linear-gradient(rgba(180,183,190,0),#b9bcc3 30%,#b9bcc3 70%,rgba(180,183,190,0))"></div>
<div style="position:absolute;left:1082px;top:271px;width:1px;height:31px;background:linear-gradient(rgba(180,183,190,0),#c9ccd3 30%,#c9ccd3 70%,rgba(180,183,190,0))"></div>
<div style="position:absolute;left:1422px;top:265px;width:250px;height:43px;background:linear-gradient(#ffffff,#f6f7f9 60%,#eceef2);border:1px solid #cfd2d8;border-radius:4px;box-sizing:border-box"></div>
<div style="position:absolute;left:1428px;top:271px;width:1px;height:31px;background:linear-gradient(rgba(180,183,190,0),#b9bcc3 30%,#b9bcc3 70%,rgba(180,183,190,0))"></div>
<div style="position:absolute;left:1431px;top:271px;width:1px;height:31px;background:linear-gradient(rgba(180,183,190,0),#b9bcc3 30%,#b9bcc3 70%,rgba(180,183,190,0))"></div>
<div style="position:absolute;left:1434px;top:271px;width:1px;height:31px;background:linear-gradient(rgba(180,183,190,0),#c9ccd3 30%,#c9ccd3 70%,rgba(180,183,190,0))"></div>
<div style="position:absolute;left:1676px;top:265px;width:249px;height:43px;background:linear-gradient(#ffffff,#f6f7f9 60%,#eceef2);border:1px solid #cfd2d8;border-radius:4px;box-sizing:border-box"></div>
<div style="position:absolute;left:1682px;top:271px;width:1px;height:31px;background:linear-gradient(rgba(180,183,190,0),#b9bcc3 30%,#b9bcc3 70%,rgba(180,183,190,0))"></div>
<div style="position:absolute;left:1685px;top:271px;width:1px;height:31px;background:linear-gradient(rgba(180,183,190,0),#b9bcc3 30%,#b9bcc3 70%,rgba(180,183,190,0))"></div>
<div style="position:absolute;left:1688px;top:271px;width:1px;height:31px;background:linear-gradient(rgba(180,183,190,0),#c9ccd3 30%,#c9ccd3 70%,rgba(180,183,190,0))"></div>
<div style="position:absolute;left:1043px;top:268px;width:20px;height:37px;background:linear-gradient(#f4f5f7,#dfe1e6);border-left:1px solid #d9dbe0"></div>
<svg style="left:1048px;top:283px;" width="11" height="7" viewBox="0 0 11 7"><path d="M1 1H10L5.5 6Z" fill="#6c7080"/></svg>
<div style="position:absolute;left:1396px;top:268px;width:20px;height:37px;background:linear-gradient(#f4f5f7,#dfe1e6);border-left:1px solid #d9dbe0"></div>
<svg style="left:1401px;top:283px;" width="11" height="7" viewBox="0 0 11 7"><path d="M1 1H10L5.5 6Z" fill="#6c7080"/></svg>
<div style="position:absolute;left:1649px;top:268px;width:20px;height:37px;background:linear-gradient(#f4f5f7,#dfe1e6);border-left:1px solid #d9dbe0"></div>
<svg style="left:1654px;top:283px;" width="11" height="7" viewBox="0 0 11 7"><path d="M1 1H10L5.5 6Z" fill="#6c7080"/></svg>
<div style="position:absolute;left:1902px;top:268px;width:20px;height:37px;background:linear-gradient(#f4f5f7,#dfe1e6);border-left:1px solid #d9dbe0"></div>
<svg style="left:1907px;top:283px;" width="11" height="7" viewBox="0 0 11 7"><path d="M1 1H10L5.5 6Z" fill="#6c7080"/></svg>
<div style="position:absolute;left:442px;top:269px;width:35px;height:33px;background:radial-gradient(ellipse at 50% 60%,#d9dce3,#eef0f3 75%);border-left:1px solid #9a9da8;border-right:1px solid #9a9da8;box-sizing:border-box"></div>
<div style="position:absolute;left:797px;top:272px;width:1px;height:30px;background:#d3d6dc"></div>
<div style="position:absolute;left:1333px;top:272px;width:1px;height:30px;background:#d3d6dc"></div>
<div style="position:absolute;left:1134px;top:270px;width:149px;height:31px;background:#fff;border:1px solid #c6c9d0;box-sizing:border-box"></div>
<svg style="left:1264px;top:281px;" width="12" height="8" viewBox="0 0 12 8"><path d="M0.5 1H11.5L6 7.5Z" fill="#222"/></svg>
<div style="position:absolute;left:1139.70px;top:278.20px;font-family:'Liberation Sans',sans-serif;font-size:16px;line-height:1;font-weight:400;color:#1e1e2e;white-space:pre;letter-spacing:-0.092px;">New selection</div>
<div style="position:absolute;left:1485px;top:270px;width:151px;height:31px;background:#fff;border:1px solid #c6c9d0;box-sizing:border-box"></div>
<svg style="left:1617px;top:281px;" width="12" height="8" viewBox="0 0 12 8"><path d="M0.5 1H11.5L6 7.5Z" fill="#222"/></svg>
<div style="position:absolute;left:1738px;top:270px;width:151px;height:31px;background:#fff;border:1px solid #c6c9d0;box-sizing:border-box"></div>
<svg style="left:1870px;top:281px;" width="12" height="8" viewBox="0 0 12 8"><path d="M0.5 1H11.5L6 7.5Z" fill="#222"/></svg>
<div style="position:absolute;left:1746.00px;top:278.20px;font-family:'Liberation Sans',sans-serif;font-size:16px;line-height:1;font-weight:400;color:#1e1e2e;white-space:pre;letter-spacing:0.346px;">Target layer</div>
<svg style="left:449px;top:272px;" width="22" height="27" viewBox="0 0 22 27"><path d="M7 23.5 L2 17 C1 15.8,2.2 14.4,3.6 15.2 L7 18 V5 C7 2.5,8.5 1.5,11 1.5 H17 C19.5 1.5,20.5 3,20.5 5.5 V20 C20.5 23,19 24.5,16 24.5 H9 Z" fill="none" stroke="#0f4b6e" stroke-width="2.2" stroke-linejoin="round"/><path d="M10.8 3V13M13.8 2.5V13M16.8 3V13" stroke="#0f4b6e" stroke-width="1.8"/></svg>
<svg style="left:486px;top:272px;" width="26" height="26" viewBox="0 0 26 26"><circle cx="10" cy="10" r="8" stroke="#0f4b6e" stroke-width="2.4" fill="none" stroke-linecap="round" stroke-linejoin="round"/><path d="M16 16L23 23" stroke="#0f4b6e" stroke-width="3" stroke-linecap="round"/><path d="M10 6V14M6 10H14" stroke="#0f4b6e" stroke-width="2.6"/></svg>
<svg style="left:525px;top:272px;" width="26" height="26" viewBox="0 0 26 26"><circle cx="10" cy="10" r="8" stroke="#0f4b6e" stroke-width="2.4" fill="none" stroke-linecap="round" stroke-linejoin="round"/><path d="M16 16L23 23" stroke="#0f4b6e" stroke-width="3" stroke-linecap="round"/><path d="M6 10H14" stroke="#0f4b6e" stroke-width="2.6"/></svg>
<svg style="left:569px;top:276px;" width="15" height="21" viewBox="0 0 15 21"><path d="M12 2L3 10.5L12 19" stroke="#0f4b6e" stroke-width="3" fill="none" stroke-linecap="round" stroke-linejoin="round"/></svg>
<svg style="left:608px;top:276px;" width="15" height="21" viewBox="0 0 15 21"><path d="M3 2L12 10.5L3 19" stroke="#0f4b6e" stroke-width="3" fill="none" stroke-linecap="round" stroke-linejoin="round"/></svg>
<svg style="left:641px;top:272px;" width="26" height="26" viewBox="0 0 26 26"><circle cx="13" cy="13" r="11" stroke="#0f4b6e" stroke-width="2.6" fill="none"/><ellipse cx="13" cy="13" rx="5" ry="11" stroke="#0f4b6e" stroke-width="2.4" fill="none"/><path d="M2 13H24M3.5 8H22.5M3.5 18H22.5" stroke="#0f4b6e" stroke-width="2.2"/></svg>
<svg style="left:680px;top:272px;" width="26" height="26" viewBox="0 0 26 26"><path d="M2 6V2H6M14 2H18V5M2 14V18H6" stroke="#a0a0a0" stroke-width="2.2" fill="none" stroke-linecap="round" stroke-linejoin="round" stroke-width="1.8"/><circle cx="12" cy="13" r="6" stroke="#a0a0a0" stroke-width="2.2" fill="none" stroke-linecap="round" stroke-linejoin="round"/><path d="M16.5 17.5L23 24" stroke="#a0a0a0" stroke-width="2.2" fill="none" stroke-linecap="round" stroke-linejoin="round"/><path d="M12 10V13H9" stroke="#a0a0a0" stroke-width="1.5" fill="none"/></svg>
<svg style="left:720px;top:272px;" width="26" height="27" viewBox="0 0 26 27"><rect x="1.5" y="10" width="9" height="12" fill="none" stroke="#b5b5b5" stroke-width="1.6"/><path d="M7 23.5 L2 17 C1 15.8,2.2 14.4,3.6 15.2 L7 18 V5 C7 2.5,8.5 1.5,11 1.5 H17 C19.5 1.5,20.5 3,20.5 5.5 V20 C20.5 23,19 24.5,16 24.5 H9 Z" transform="translate(4,0)" stroke="#a0a0a0" stroke-width="2.2" fill="none" stroke-linecap="round" stroke-linejoin="round" stroke-width="2" fill="#fbfbfc"/><path d="M14.8 3V13M17.8 2.5V13M20.8 3V13" stroke="#a0a0a0" stroke-width="1.5"/></svg>
<svg style="left:759px;top:271px;" width="27" height="27" viewBox="0 0 27 27"><path d="M4 8H15L11.5 14V19H7.5V14Z" stroke="#0f4b6e" stroke-width="2.4" fill="none" stroke-linecap="round" stroke-linejoin="round" stroke-width="2.3"/><path d="M9.5 1V3.5M2 3L4 5M17 3L15 5" stroke="#0f4b6e" stroke-width="2.2"/><path d="M16 19L23 26M23 19L16 26" stroke="#0f4b6e" stroke-width="2.4"/></svg>
<svg style="left:809px;top:273px;" width="25" height="25" viewBox="0 0 25 25"><circle cx="12" cy="12" r="10.5" stroke="#0f4b6e" stroke-width="2.3" fill="none"/><path d="M12 10V18" stroke="#0f4b6e" stroke-width="2.6"/><circle cx="12" cy="6.8" r="1.5" fill="#0f4b6e"/></svg>
<svg style="left:848px;top:273px;" width="26" height="25" viewBox="0 0 26 25"><path d="M10 20H2V2H24V9" stroke="#0f4b6e" stroke-width="2.3" fill="none"/><path d="M2 6.5H24" stroke="#0f4b6e" stroke-width="2"/><path d="M12 23L13 19L21.5 10.5L24.5 13.5L16 22Z" stroke="#0f4b6e" stroke-width="2" fill="none" stroke-linejoin="round"/></svg>
<svg style="left:887px;top:272px;" width="26" height="27" viewBox="0 0 26 27"><circle cx="13" cy="8" r="5.3" stroke="#0f4b6e" stroke-width="2.4" fill="none" stroke-linecap="round" stroke-linejoin="round" stroke-width="2.3"/><circle cx="13" cy="19" r="5.3" stroke="#0f4b6e" stroke-width="2.4" fill="none" stroke-linecap="round" stroke-linejoin="round" stroke-width="2.3"/><circle cx="7.5" cy="13.5" r="5.3" stroke="#0f4b6e" stroke-width="2.4" fill="none" stroke-linecap="round" stroke-linejoin="round" stroke-width="2.3"/><circle cx="18.5" cy="13.5" r="5.3" stroke="#0f4b6e" stroke-width="2.4" fill="none" stroke-linecap="round" stroke-linejoin="round" stroke-width="2.3"/><circle cx="13" cy="2.5" r="1.6" fill="#0f4b6e"/><circle cx="13" cy="24.5" r="1.6" fill="#0f4b6e"/><circle cx="2" cy="13.5" r="1.6" fill="#0f4b6e"/><circle cx="24" cy="13.5" r="1.6" fill="#0f4b6e"/></svg>
<svg style="left:927px;top:272px;" width="24" height="27" viewBox="0 0 24 27"><path d="M3 26V2H11V5H21V15H11V12H3" stroke="#0f4b6e" stroke-width="2.5" fill="none" stroke-linejoin="miter"/></svg>
<svg style="left:965px;top:273px;" width="26" height="25" viewBox="0 0 26 25"><path d="M2 1V23H24" stroke="#0f4b6e" stroke-width="2.4" fill="none"/><path d="M5 20V16L10 12L14 15L19 8H24V20Z" fill="#0f4b6e"/></svg>
<svg style="left:1003px;top:279px;" width="27" height="13" viewBox="0 0 27 13"><rect x="2" y="2" width="23" height="9" stroke="#0f4b6e" stroke-width="2.6" fill="none"/><path d="M7 3V6M11 3V6M15 3V6M19 3V6" stroke="#0f4b6e" stroke-width="1.2"/></svg>
<svg style="left:1101px;top:273px;" width="27" height="26" viewBox="0 0 27 26"><path d="M3 3L24 11L14 14L11 24Z" stroke="#0f4b6e" stroke-width="2.6" fill="none" stroke-linejoin="round"/></svg>
<svg style="left:1295px;top:273px;" width="27" height="26" viewBox="0 0 27 26"><path d="M2 2L17 8L10 10L8 17Z" stroke="#0f4b6e" stroke-width="2.3" fill="none" stroke-linejoin="round"/><path d="M15 14H24M16 18H23M17 22H21" stroke="#0f4b6e" stroke-width="2"/></svg>
<svg style="left:1349px;top:273px;" width="20" height="26" viewBox="0 0 20 26"><path d="M10 2C4 2,2 7,2 12V17C2 22,5 24,10 24C15 24,18 22,18 17V12C18 7,16 2,10 2Z" stroke="#0f4b6e" stroke-width="2.4" fill="none"/><path d="M2 11H18M10 2V11" stroke="#0f4b6e" stroke-width="2"/><path d="M3 11C3 6,6 3,9.5 2.5V11Z" fill="#0f4b6e"/></svg>
<svg style="left:1456px;top:273px;" width="23" height="25" viewBox="0 0 23 25"><path d="M11.5 2L21 9.5L11.5 17L2 9.5Z" fill="none" stroke="#0f4b6e" stroke-width="2.6" stroke-linejoin="miter"/><path d="M2.5 15L11.5 22L20.5 15" fill="none" stroke="#0f4b6e" stroke-width="2.6"/></svg>
<svg style="left:1708px;top:273px;" width="23" height="25" viewBox="0 0 23 25"><path d="M11.5 2L21 9.5L11.5 17L2 9.5Z" fill="#0f4b6e" stroke="#0f4b6e" stroke-width="2.6" stroke-linejoin="miter"/><path d="M2.5 15L11.5 22L20.5 15" fill="none" stroke="#0f4b6e" stroke-width="2.6"/></svg>
<svg style="left:413px;top:309px;overflow:hidden" width="1507" height="752" viewBox="413 309 1507 752"><rect x="413" y="309" width="1507" height="752" fill="#73b3e3"/><polygon fill="#e8e1dc" points="458.6,309 455,330 451,380 453.4,432 462,448 479.5,460 510.8,472 531.6,496 536,502 537.7,580 540,620 543.8,649 539.5,665 542,700 541,721 536,742 549,761 584,775 600,781 600,309"/><polygon fill="#e8e1dc" points="413,654.6 439.5,639 451.7,628.6 462,618 465,622 455,645 432.6,667 413,679"/><polygon fill="#ede4c6" points="413,508 422,523.5 456,526 475,549 475,570 472.5,601 462,618 451.7,628.6 439.5,639 413,654.6"/><polygon fill="#c8dea0" points="547,700 556,688 577,677 600,669 600,764 575,755.6 563,745 552.5,717"/><polygon fill="#e8e1dc" points="460,1061 465,1044 493,1024 523,1021 547,1039 559,1049 572,1051 606,1047 652,1061"/><polygon fill="#c8dea0" points="464,1061 469,1045 495,1026 522,1024 545,1042 557,1052 572,1054 605,1050 645,1061"/><polygon fill="#d9cdc1" points="488.6,309 507.9,309 504.5,340 485.3,335"/><polygon fill="#d9cdc1" points="515.2,330.4 535,324.2 549,366 527.6,375"/><polygon fill="#d9cdc1" points="544,327.6 568.3,319 566.6,309 597,309 597,337.8 578.5,343.4 583,358 575,362.6 563.8,333.2 546.8,337.8"/><polygon fill="#d9cdc1" points="523.1,399.5 543,394.4 544.5,399.5 526.8,406.2"/><polygon fill="#d9cdc1" points="548.2,392.9 572.6,385.5 574,391 548.2,398"/><polygon fill="#d9cdc1" points="572.6,379.6 585,374.4 597,375.9 597,382.6 575.6,389.2"/><polygon fill="#d9cdc1" points="529,418.7 566,408.4 566.7,413 532,423.9"/><polygon fill="#d9cdc1" points="569.7,405.5 580,401 580.7,409.9 569.7,410.6"/><polygon fill="#d9cdc1" points="583,401 597,398 597,417 585,413"/><polygon fill="#d9cdc1" points="536.4,430.6 548.2,427.6 549,432.5 537.2,434"/><polygon fill="#d9cdc1" points="552,423.2 563,421.5 563.5,428 552.5,430"/><polygon fill="#d9cdc1" points="567,420 577,418 578,425 568,427"/><polygon fill="#d9cdc1" points="582,421 590,419 593,431 585,434"/><polygon fill="#d9cdc1" points="524.205161014272,439.0835193820339 540.805161014272,453.3835193820339 544.394838985728,449.2164806179661 527.794838985728,434.9164806179661"/><polygon fill="#d9cdc1" points="548.7,446 560,443 561.5,450.5 550,453"/><polygon fill="#d9cdc1" points="564.3,440 573,436 575.5,443.5 566.5,446.5"/><polygon fill="#d9cdc1" points="557.3,472 570,469 575.6,491.2 562,490"/><polygon fill="#d9cdc1" points="576.5,467 587.7,466 588,472 577,473"/><polygon fill="#d9cdc1" points="590,470 597,469 597,490 592,488"/><polygon fill="#d9cdc1" points="576.5,489.5 589.5,486 591,500 579,500"/><polygon fill="#d9cdc1" points="588,504 597,500 597,516 590,515"/><polygon fill="#d9cdc1" points="568.2,517.1 583.2,537.1 588.8,532.9 573.8,512.9"/><polygon fill="#d9cdc1" points="583.8,543.4 597,541 597,557.3 585,557"/><polygon fill="#d9cdc1" points="576.8,562 597,560.8 597,574.7 578,574"/><polygon fill="#d9cdc1" points="583.8,578.2 597,578 597,595.6 586,595"/><polygon fill="#d9cdc1" points="583.8,602.5 597,602 597,619.9 586,619"/><polygon fill="#d9cdc1" points="587.2,625 597,625 597,640.7 589,640"/><polygon fill="#d9cdc1" points="583.8,647.7 597,648 597,661.6 586,661"/><path d="M534.2 406.2 L588.9 389.2 L597 392 M549.7 434.3 L569.7 429 L580 435 M568.6 463.4 L573.8 452 L582.5 440.9 L597 436 M586.9 454.8 L597 451.3 M578 441 L597 427" stroke="#fbfaf8" stroke-width="2.6" stroke-dasharray="7 2" fill="none"/><path d="M479.6 309 L476.8 339 L480.2 359 L488 373 L496 401 L511.8 429 L536.5 469.5 L552 487.8 L560.8 506.9 L566.4 543.4 L571.6 604.3 L576.8 670.3 L592.4 696.3 L600 712" stroke="#f5f2ee" stroke-width="1.5" stroke-dasharray="2.5 1.5" fill="none"/><path d="M519.7 309 L512.9 339 L516.3 364 L526 382.6 L537.2 383.3 L574 372.2 L600 366" stroke="#f1ece6" stroke-width="1.6" fill="none"/><path d="M537.4 468.7 L540.8 463.4 L550.4 460.8 L552 453 L566 453.9 M571.6 599 L597 595.6 M566.4 652.9 L545.5 652.9" stroke="#f1ece6" stroke-width="1.3" stroke-dasharray="3 1.5" fill="none"/><text x="0" y="0" font-family="Liberation Sans" font-size="7" fill="#444" transform="translate(569 470) rotate(38)">Po'o Ln</text><path d="M460.4 618.2 L486.5 633.8 L510.8 634.7 L535 644 L552.5 653 L565 656" stroke="#f4f1ec" stroke-width="2" fill="none"/><path d="M460.4 620 L486.5 635.5 L510.8 636.5 L535 645.5 L552.5 655" stroke="#b9b2aa" stroke-width="0.8" fill="none" opacity="0.6"/><path d="M413 808 L460 806 L528 811 L545.5 820 L566.4 828.6 L600 835" stroke="#4a80cc" stroke-width="1.3" stroke-dasharray="7 3 2 3" fill="none" opacity="0.85"/><path d="M413 820 L444.8 827.7 L483 834.7 L521 841.6 L557.7 851 L600 867" stroke="#4a80cc" stroke-width="1.3" stroke-dasharray="7 3 2 3" fill="none" opacity="0.85"/><path d="M413 944 L439.7 951.6 L472.5 950 L503.75 939 L556.9 921.9 L600 904" stroke="#4a80cc" stroke-width="1.3" stroke-dasharray="7 3 2 3" fill="none" opacity="0.85"/><path d="M413 1043 L472.5 1018.75 L511.6 1000 L550.6 975 L600 946" stroke="#4a80cc" stroke-width="1.3" stroke-dasharray="7 3 2 3" fill="none" opacity="0.85"/><path d="M466.3 341 L483 382 L466 375.6 L449.3 382 Z" fill="#0f4b6e" stroke="#0f4b6e" stroke-width="1" stroke-linejoin="round"/><path d="M466.2 353.5 L475.8 375.1 L466.2 371.3 Z" fill="#e8e1dc"/><polygon fill="#e8e1dc" points="1150,668 1159,686 1167,711 1160,730 1150,756"/><polygon fill="#ede4c6" points="1150,690 1155,700 1158,711 1154,725 1150,740"/><polygon fill="#e8e1dc" points="1140,1061 1153,1048 1162,1033 1172,1012 1186,994 1198,985.5 1218,978 1242,969 1275,965 1299,970 1322,976 1340,983 1340,1061"/><polygon fill="#c8dea0" points="1219,979.5 1265,977 1299,982.5 1340,990 1340,1061 1223.8,1061"/><polygon fill="#c8dea0" points="1140,1061 1160,1042 1169,1033 1182,1061"/><polygon fill="#d9cdc1" points="1212,1001 1222,997 1226,1006 1215,1009"/><polygon fill="#d9cdc1" points="1214,1013 1221,1012 1221,1030 1212,1030"/><polygon fill="#d9cdc1" points="1256,996 1265,1000 1262,1008 1253,1005"/><polygon fill="#d9cdc1" points="1237,1004 1248,1004 1249,1013 1238,1014"/><polygon fill="#d9cdc1" points="1250,1024 1262,1024 1263,1033 1251,1034"/><polygon fill="#d9cdc1" points="1264,1036 1272,1036 1272,1044 1264,1044"/><polygon fill="#d9cdc1" points="1287,1000 1296,1000 1296,1008 1287,1008"/><polygon fill="#d9cdc1" points="1290,1016 1300,1016 1300,1025 1290,1025"/><polygon fill="#d9cdc1" points="1307,1002 1315,1002 1315,1010 1307,1010"/><polygon fill="#d9cdc1" points="1315,1015 1324,1015 1324,1024 1315,1024"/><polygon fill="#d9cdc1" points="1312,1030 1322,1030 1322,1040 1312,1040"/><polygon fill="#d9cdc1" points="1300,1045 1310,1045 1310,1055 1300,1055"/><polygon fill="#d9cdc1" points="1285,1047 1293,1047 1293,1057 1285,1057"/><polygon fill="#d9cdc1" points="1214,1044 1222,1044 1222,1061 1214,1061"/><polygon fill="#d9cdc1" points="1240,1053 1255,1053 1255,1061 1240,1061"/><path d="M1276.5 1061 L1267 997.5 L1273 992.7 L1285 992.7 L1305.3 1028.6 L1324.4 1061" stroke="#fff" stroke-width="2" fill="none"/><path d="M1160.3 312 L1205 401.6 L1245.6 470.7 L1278 515 L1310.7 568 L1337 608.9" stroke="#3d78cc" stroke-width="1.1" stroke-dasharray="4 2" fill="none"/><path d="M1335 742.8 L1302.6 763 L1241.6 812 L1201 852.6 L1152 921.6" stroke="#3d78cc" stroke-width="1.1" stroke-dasharray="4 2" fill="none"/><path d="M1331 842.4 L1318.8 844.5 L1262 889 L1201 934 L1152 966.4" stroke="#3d78cc" stroke-width="1.1" stroke-dasharray="4 2" fill="none"/><polygon fill="#e8e1dc" points="970,1061 978.7,1052.3 1000,1051 1040,1052 1080,1051 1152,1044 1152,1061"/><polygon fill="#c8dea0" points="1040,1061 1060,1054 1100,1052 1152,1046 1152,1061"/><path d="M825 1061 L852 1044" stroke="#fff" stroke-width="11" fill="none"/><path d="M817 1061 L842 1044" stroke="#e8e1dc" stroke-width="2" fill="none"/><path d="M863 1061 L881 1044" stroke="#3d78cc" stroke-width="1.2" fill="none"/><rect x="597" y="309" width="555.5" height="735.5" fill="#fff"/><polygon fill="#fff" points="1344,309 1361,309 1361,1061 1328,1061 1328,1025 1329.2,1025 1329.2,950 1331,950 1331,880 1332.4,880 1332.4,800 1333.6,800 1333.6,760 1335,760 1335,686 1336.4,686 1336.4,600 1338,600 1338,560 1339.6,560 1339.6,490 1340.8,490 1340.8,420 1342.4,420 1342.4,350 1344,350"/><rect x="1361" y="309" width="559" height="752" fill="#96c2e1"/><polygon fill="#d6e4bd" points="1362,1026 1385,1036 1437.5,1041 1480.8,1036 1513.3,1030.5 1529.6,1033 1556.7,1046 1565,1061 1362,1061"/><polygon fill="#e6e0d5" points="1362,1049 1400,1051 1440,1053 1480,1049 1520,1047 1545,1050 1556,1061 1362,1061"/><path d="M1540 1037 L1556.7 1046 L1565 1061" stroke="#e8dca0" stroke-width="4" fill="none"/><rect x="1361.5" y="418.6" width="46" height="10.6" fill="#e5ecf2" opacity="0.85"/><text x="1363" y="427" font-family="Liberation Sans" font-size="8" fill="#555">contributors</text><g transform="rotate(0.7 1662 424)"><rect x="1662" y="423.5" width="166.6" height="11.5" fill="#dde8f1" opacity="0.7"/><text x="1664" y="433.5" font-family="Liberation Sans" font-size="9" fill="#333" textLength="162" lengthAdjust="spacingAndGlyphs">© MapTiler © OpenStreetMap contributors</text></g><rect x="1361.5" y="838.3" width="39" height="10.6" fill="#e5ecf2" opacity="0.85"/><text x="1362" y="846.5" font-family="Liberation Sans" font-size="8" fill="#666">ntributors</text><g transform="rotate(0.7 1654 842.4)"><rect x="1654" y="842" width="167.7" height="11.5" fill="#dde8f1" opacity="0.7"/><text x="1656" y="852" font-family="Liberation Sans" font-size="9" fill="#555" textLength="162" lengthAdjust="spacingAndGlyphs">© MapTiler © OpenStreetMap contributors</text></g><rect x="1353.2" y="1038" width="429.5" height="12.5" fill="none" stroke="#4a4a4a" stroke-width="1.6"/><rect x="1353.20" y="1037.2" width="42.95" height="14" fill="#000"/><rect x="1439.10" y="1037.2" width="42.95" height="14" fill="#000"/><rect x="1525.00" y="1037.2" width="42.95" height="14" fill="#000"/><rect x="1610.90" y="1037.2" width="42.95" height="14" fill="#000"/><rect x="1696.80" y="1037.2" width="42.95" height="14" fill="#000"/><rect x="1352.40" y="1032.5" width="1.8" height="6" fill="#333"/><rect x="1438.30" y="1032.5" width="1.8" height="6" fill="#333"/><rect x="1524.20" y="1032.5" width="1.8" height="6" fill="#333"/><rect x="1610.10" y="1032.5" width="1.8" height="6" fill="#333"/><rect x="1696.00" y="1032.5" width="1.8" height="6" fill="#333"/><rect x="1781.90" y="1032.5" width="1.8" height="6" fill="#333"/><text x="1350.8" y="1026.5" font-family="Liberation Sans" font-weight="700" font-size="9.5" fill="#000" text-anchor="start" letter-spacing="-0.3">0</text><text x="1439.1" y="1026.5" font-family="Liberation Sans" font-weight="700" font-size="9.5" fill="#000" text-anchor="middle" letter-spacing="-0.3">100.0</text><text x="1525.0" y="1026.5" font-family="Liberation Sans" font-weight="700" font-size="9.5" fill="#000" text-anchor="middle" letter-spacing="-0.3">200.0</text><text x="1610.9" y="1026.5" font-family="Liberation Sans" font-weight="700" font-size="9.5" fill="#000" text-anchor="middle" letter-spacing="-0.3">300.0</text><text x="1696.8" y="1026.5" font-family="Liberation Sans" font-weight="700" font-size="9.5" fill="#000" text-anchor="middle" letter-spacing="-0.3">400.0</text><text x="1782.7" y="1026.5" font-family="Liberation Sans" font-weight="700" font-size="9.5" fill="#000" text-anchor="middle" letter-spacing="-0.3">500.0</text><text x="1797.7" y="1047.5" font-family="Liberation Sans" font-weight="700" font-size="9.5" fill="#000" letter-spacing="-0.4">Meters</text></svg>
<div style="position:absolute;left:414px;top:1061px;width:1506px;height:33px;background:#efefef"></div>
<div style="position:absolute;left:412px;top:1093.7px;width:1508px;height:1.7px;background:#9c9ea9"></div>
<div style="position:absolute;left:901.70px;top:1068.52px;font-family:'Liberation Sans',sans-serif;font-size:19.5px;line-height:1;font-weight:400;color:#23263a;white-space:pre;letter-spacing:0.000px;transform:scaleX(0.8534);transform-origin:0 0;">X: 1752254.272, Y: 5948544.837 [Meter]</div>
<div style="position:absolute;left:1220.20px;top:1068.52px;font-family:'Liberation Sans',sans-serif;font-size:19.5px;line-height:1;font-weight:400;color:#23263a;white-space:pre;letter-spacing:0.000px;transform:scaleX(0.8589);transform-origin:0 0;">Map scale: 6607.593</div>
<svg style="left:597px;top:309px" width="556" height="736" viewBox="597 309 556 736"><polyline points="682.3,413.6 743,598 851,655.8" stroke="#0a0af5" stroke-width="4.2" fill="none" stroke-linejoin="round"/><polyline points="831.6,359.3 866,482 870.2,553.1 870.8,614.2 851,655.8" stroke="#0a0af5" stroke-width="4.2" fill="none" stroke-linejoin="round"/><polyline points="953,320.5 1008.3,531.25" stroke="#0a0af5" stroke-width="4.2" fill="none" stroke-linejoin="round"/><polyline points="870.2,553.1 933.75,534.4 1008.3,531.25" stroke="#0a0af5" stroke-width="4.2" fill="none" stroke-linejoin="round"/><polyline points="1008.3,531.25 968.6,709.7" stroke="#0a0af5" stroke-width="4.2" fill="none" stroke-linejoin="round"/><polyline points="851,655.8 968.6,709.7" stroke="#0a0af5" stroke-width="4.2" fill="none" stroke-linejoin="round"/><polyline points="968.6,709.7 914.2,918.9" stroke="#0a0af5" stroke-width="4.2" fill="none" stroke-linejoin="round"/><polyline points="914.2,918.9 864.7,1024" stroke="#0a0af5" stroke-width="4.2" fill="none" stroke-linejoin="round"/><circle cx="682.3" cy="413.6" r="11" fill="#ff7f00" stroke="#3f8a2a" stroke-width="1.2"/><circle cx="831.6" cy="359.3" r="11" fill="#ff7f00" stroke="#3f8a2a" stroke-width="1.2"/><circle cx="953" cy="320.5" r="11" fill="#ff7f00" stroke="#3f8a2a" stroke-width="1.2"/><circle cx="870.2" cy="553.1" r="11" fill="#ff7f00" stroke="#3f8a2a" stroke-width="1.2"/><circle cx="1008.3" cy="531.25" r="11" fill="#ff7f00" stroke="#3f8a2a" stroke-width="1.2"/><circle cx="851" cy="655.8" r="11" fill="#ff7f00" stroke="#3f8a2a" stroke-width="1.2"/><circle cx="968.6" cy="709.7" r="11" fill="#ff7f00" stroke="#3f8a2a" stroke-width="1.2"/><circle cx="914.2" cy="918.9" r="11" fill="#ff7f00" stroke="#3f8a2a" stroke-width="1.2"/><path d="M850 1025 L871 1025 L860.5 1037.5 Z" fill="#fff" stroke="#1d4d6e" stroke-width="2.2" stroke-linejoin="round"/></svg>
<div style="position:absolute;left:628.75px;top:357.10px;font-family:'Liberation Sans',sans-serif;font-size:22px;line-height:1;font-weight:700;color:#111;white-space:pre;letter-spacing:0.116px;">GL: <span style="font-weight:400;-webkit-text-stroke:0.7px #111">5.25</span>m</div>
<div style="position:absolute;left:630.50px;top:382.60px;font-family:'Liberation Sans',sans-serif;font-size:22px;line-height:1;font-weight:700;color:#111;white-space:pre;letter-spacing:0.043px;">BL: <span style="font-weight:400;-webkit-text-stroke:0.7px #111">2.75</span>m</div>
<div style="position:absolute;left:792.00px;top:309.00px;font-family:'Liberation Sans',sans-serif;font-size:22px;line-height:1;font-weight:700;color:#111;white-space:pre;letter-spacing:-0.020px;">GL: <span style="font-weight:400;-webkit-text-stroke:0.7px #111">4.0</span>m</div>
<div style="position:absolute;left:792.80px;top:334.50px;font-family:'Liberation Sans',sans-serif;font-size:22px;line-height:1;font-weight:700;color:#111;white-space:pre;letter-spacing:-0.132px;">BL: <span style="font-weight:400;-webkit-text-stroke:0.7px #111">2.5</span>m</div>
<div style="position:absolute;left:970.80px;top:310.50px;font-family:'Liberation Sans',sans-serif;font-size:22px;line-height:1;font-weight:700;color:#111;white-space:pre;letter-spacing:-0.063px;">GL: <span style="font-weight:400;-webkit-text-stroke:0.7px #111">3.8</span>m</div>
<div style="position:absolute;left:971.00px;top:336.30px;font-family:'Liberation Sans',sans-serif;font-size:22px;line-height:1;font-weight:700;color:#111;white-space:pre;letter-spacing:-0.060px;">BL: <span style="font-weight:400;-webkit-text-stroke:0.7px #111">2.3</span>m</div>
<div style="position:absolute;left:754.60px;top:532.10px;font-family:'Liberation Sans',sans-serif;font-size:22px;line-height:1;font-weight:700;color:#111;white-space:pre;letter-spacing:0.116px;">GL: <span style="font-weight:400;-webkit-text-stroke:0.7px #111">4.35</span>m</div>
<div style="position:absolute;left:756.70px;top:559.60px;font-family:'Liberation Sans',sans-serif;font-size:22px;line-height:1;font-weight:700;color:#111;white-space:pre;letter-spacing:0.018px;">BL: <span style="font-weight:400;-webkit-text-stroke:0.7px #111">1.85</span>m</div>
<div style="position:absolute;left:1013.00px;top:507.10px;font-family:'Liberation Sans',sans-serif;font-size:22px;line-height:1;font-weight:700;color:#111;white-space:pre;letter-spacing:0.203px;">GL: <span style="font-weight:400;-webkit-text-stroke:0.7px #111">4.25</span>m</div>
<div style="position:absolute;left:1013.30px;top:532.10px;font-family:'Liberation Sans',sans-serif;font-size:22px;line-height:1;font-weight:700;color:#111;white-space:pre;letter-spacing:0.193px;">BL: <span style="font-weight:400;-webkit-text-stroke:0.7px #111">1.75</span>m</div>
<div style="position:absolute;left:749.40px;top:665.40px;font-family:'Liberation Sans',sans-serif;font-size:22px;line-height:1;font-weight:700;color:#111;white-space:pre;letter-spacing:0.116px;">GL: <span style="font-weight:400;-webkit-text-stroke:0.7px #111">4.20</span>m</div>
<div style="position:absolute;left:750.40px;top:690.40px;font-family:'Liberation Sans',sans-serif;font-size:22px;line-height:1;font-weight:700;color:#111;white-space:pre;letter-spacing:0.143px;">BL: <span style="font-weight:400;-webkit-text-stroke:0.7px #111">1.70</span>m</div>
<div style="position:absolute;left:976.50px;top:712.50px;font-family:'Liberation Sans',sans-serif;font-size:22px;line-height:1;font-weight:700;color:#111;white-space:pre;letter-spacing:0.166px;">GL: <span style="font-weight:400;-webkit-text-stroke:0.7px #111">4.75</span>m</div>
<div style="position:absolute;left:977.00px;top:738.30px;font-family:'Liberation Sans',sans-serif;font-size:22px;line-height:1;font-weight:700;color:#111;white-space:pre;letter-spacing:0.230px;">BL: <span style="font-weight:400;-webkit-text-stroke:0.7px #111">1.50</span>m</div>
<div style="position:absolute;left:799.30px;top:882.10px;font-family:'Liberation Sans',sans-serif;font-size:22px;line-height:1;font-weight:700;color:#111;white-space:pre;letter-spacing:0.116px;">GL: <span style="font-weight:400;-webkit-text-stroke:0.7px #111">3.25</span>m</div>
<div style="position:absolute;left:800.00px;top:907.70px;font-family:'Liberation Sans',sans-serif;font-size:22px;line-height:1;font-weight:700;color:#111;white-space:pre;letter-spacing:0.105px;">BL: <span style="font-weight:400;-webkit-text-stroke:0.7px #111">0.75</span>m</div>
<div style="position:absolute;left:763.70px;top:974.00px;font-family:'Liberation Sans',sans-serif;font-size:22px;line-height:1;font-weight:700;color:#111;white-space:pre;letter-spacing:0.108px;">GL: <span style="font-weight:400;-webkit-text-stroke:0.7px #111">2.5</span>m</div>
<div style="position:absolute;left:764.30px;top:999.80px;font-family:'Liberation Sans',sans-serif;font-size:22px;line-height:1;font-weight:700;color:#111;white-space:pre;letter-spacing:0.197px;">BL: <span style="font-weight:400;-webkit-text-stroke:0.7px #111">0.5</span>m</div>
<svg style="left:1201px;top:693px;" width="23" height="27" viewBox="0 0 23 27"><path d="M7 23.5 L2 17 C1 15.8,2.2 14.4,3.6 15.2 L7 18 V5 C7 2.5,8.5 1.5,11 1.5 H17 C19.5 1.5,20.5 3,20.5 5.5 V20 C20.5 23,19 24.5,16 24.5 H9 Z" fill="#fff" stroke="#163c56" stroke-width="2" stroke-linejoin="round" transform="translate(0,0) scale(0.95)"/><path d="M10.3 3V12M13.2 2.5V12M16 3V12" stroke="#163c56" stroke-width="1.4"/></svg>
</body></html>
